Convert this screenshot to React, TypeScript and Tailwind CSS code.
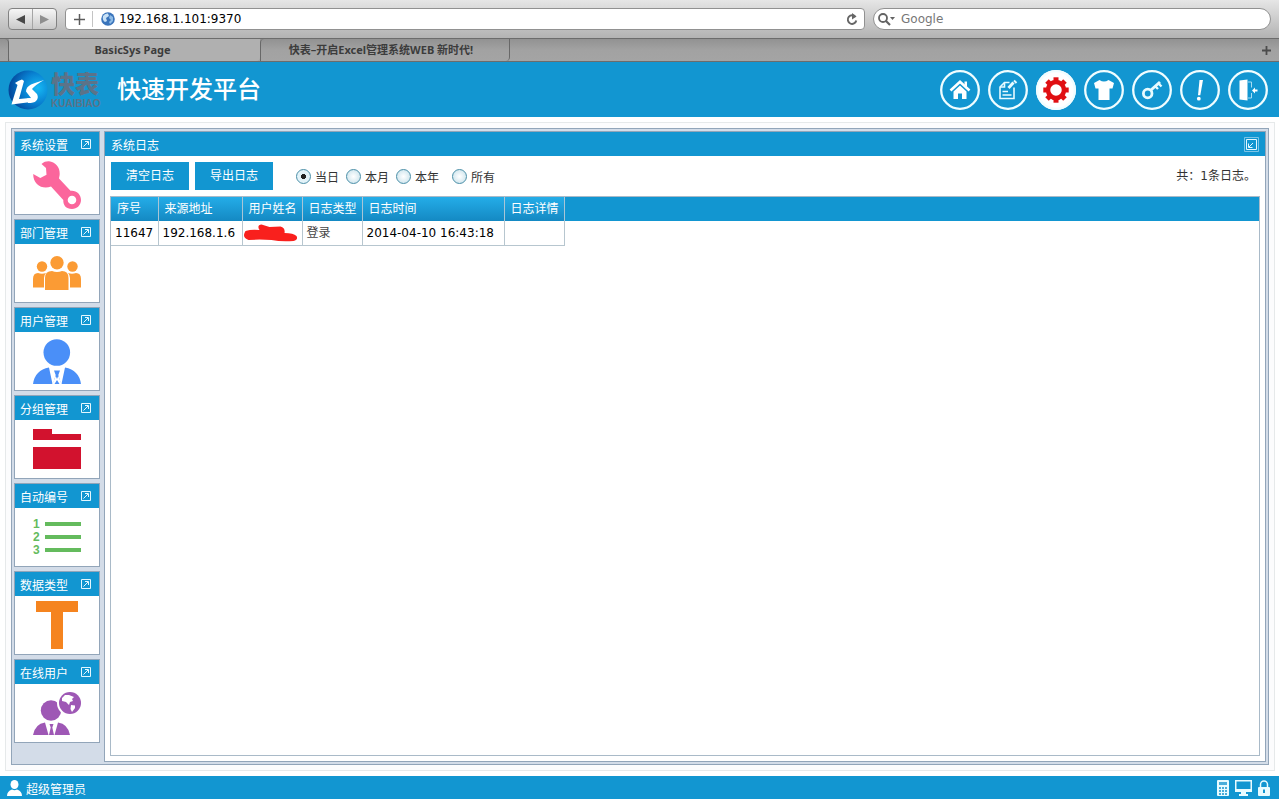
import type { ReactNode } from "react";

type Shortcut = { label: string; icon: ReactNode };
type Tool = { label: string; icon: ReactNode; active?: boolean };

const shortcuts: Shortcut[] = [
  {
    label: "系统设置",
    icon: (
      <svg width="48" height="48" viewBox="0 0 48 48" aria-hidden>
        <path
          fill="#fb669c"
          fillRule="evenodd"
          d="M8.500 3C11 .8 13 .2 16 .3C22 1 27 6 26.700 13C26.600 15 26 16.500 26 17.500L37.500 29.800C43 29 48 33 48 39C48 44 44 48 39 48C33 48 30 44 30.300 39L18 25.500C10 29 0 24 .2 13L7.300 17L13.500 13.700L13 7ZM39 34.700A4.300 4.300 0 1 0 39 43.300A4.300 4.300 0 1 0 39 34.700Z"
        />
      </svg>
    ),
  },
  {
    label: "部门管理",
    icon: (
      <svg width="48" height="34" viewBox="0 0 48 34" fill="#fb9b34" aria-hidden>
        <circle cx="24" cy="6.700" r="6.700" />
        <circle cx="9" cy="10.500" r="5.200" />
        <circle cx="39.500" cy="10.500" r="5.200" />
        <path d="M12 34V22Q12 15 19 15Q24 17 29 15Q35.500 15 35.500 22V34Z" />
        <path d="M0 31.500V23Q0 17 5 17Q9 18.500 13 17Q11 19 11 22V31.500Z" />
        <path d="M48 31.500V23Q48 17 43 17Q39 18.500 35 17Q37 19 37 22V31.500Z" />
      </svg>
    ),
  },
  {
    label: "用户管理",
    icon: (
      <svg width="48" height="45" viewBox="0 0 48 45" fill="#4a8ff8" aria-hidden>
        <circle cx="23.800" cy="13.500" r="13.300" />
        <path d="M0 45Q2 31 16 28.500L19.500 45ZM48 45Q46 31 32 28.500L28.500 45Z" />
        <path d="M21 31.500H27L25.300 36L28 45H20L22.700 36Z" />
        <path fill="#fff" d="M19.500 45L22.700 37L24 40L25.300 37L28.500 45H26.500L24 41L21.500 45Z" />
      </svg>
    ),
  },
  {
    label: "分组管理",
    icon: (
      <svg width="48" height="40" viewBox="0 0 48 40" fill="#d2122e" aria-hidden>
        <path d="M0 0H19V5H48V11H0ZM0 18H48V40H0Z" />
      </svg>
    ),
  },
  {
    label: "自动编号",
    icon: (
      <svg width="48" height="38" viewBox="0 0 48 38" fill="#64bb5d" aria-hidden>
        <path d="M12 4H48V8H12ZM12 17H48V21H12ZM12 30H48V34H12Z" />
        <g className="font-['Liberation_Sans',sans-serif] text-[12px] font-bold">
          <text x="0" y="10">1</text>
          <text x="0" y="23">2</text>
          <text x="0" y="36">3</text>
        </g>
      </svg>
    ),
  },
  {
    label: "数据类型",
    icon: (
      <svg width="42" height="48" viewBox="0 0 42 48" fill="#f5841f" aria-hidden>
        <path d="M0 0H42V11H27V48H15V11H0Z" />
      </svg>
    ),
  },
  {
    label: "在线用户",
    icon: (
      <svg width="48" height="43" viewBox="0 0 48 43" fill="#9e58b5" aria-hidden>
        <circle cx="18" cy="18.500" r="10.200" />
        <path d="M0 43Q2 32 12 30.500L15.500 43ZM37 43Q35 32 25 30.500L21.500 43Z" />
        <path d="M16.500 32H20.500L19.300 35.500L21 43H16L17.700 35.500Z" />
        <circle cx="37" cy="11" r="13" fill="#fff" />
        <circle cx="37" cy="11" r="11" />
        <path
          fill="#fff"
          d="M29 6L32 3L36 3L41 5L39 7L40 9L37 10L36 13L33 10L29 9ZM38 13L42 13.500L42 16L39 20L37.500 17Z"
        />
      </svg>
    ),
  },
];

const tools: Tool[] = [
  {
    label: "首页",
    icon: (
      <>
        <path d="M10.500 20.500L20 11.800L29.500 20.500" fill="none" stroke="#fff" strokeWidth="2.600" />
        <path d="M24.500 11.500H27V17L24.500 15Z" />
        <path d="M13.500 21.500L20 15.500L26.500 21.500V29H22V23.500H18V29H13.500Z" />
      </>
    ),
  },
  {
    label: "日志",
    icon: (
      <g fill="none" stroke="#e8fbff" strokeWidth="1.600">
        <path d="M21.500 12.500H16.500L12 17V28.500H26V17.500" />
        <path d="M16.500 12.500V17H12M14.500 21.500H20M14.500 25H23.500" />
        <path d="M20.500 18L25.500 12.500" strokeWidth="3" />
        <path d="M26 10.500L28.500 13" strokeWidth="2" />
      </g>
    ),
  },
  {
    label: "设置",
    active: true,
    icon: (
      <g stroke="#e00f12" fill="none">
        <circle cx="20" cy="20" r="8" strokeWidth="4.500" />
        {[0, 45, 90, 135, 180, 225, 270, 315].map((a) => (
          <path key={a} d="M20 11.500V7.300" strokeWidth="5" transform={`rotate(${a} 20 20)`} />
        ))}
      </g>
    ),
  },
  {
    label: "皮肤",
    icon: <path d="M15.500 10Q20 13 24.500 10L30 13L28.500 18.500H25.500V30H14.500V18.500H11.500L10 13Z" />,
  },
  {
    label: "密码",
    icon: (
      <g fill="none" stroke="#e8fbff">
        <circle cx="15.700" cy="23.500" r="4.300" strokeWidth="2.800" />
        <path d="M19 20L28 12" strokeWidth="3" />
        <path d="M23.500 16.500L26 19M26.500 13.500L29.500 16.500" strokeWidth="2.400" />
      </g>
    ),
  },
  {
    label: "提示",
    icon: (
      <>
        <path d="M19.500 10H23L20.300 25.300H18Z" />
        <circle cx="18.800" cy="28.700" r="1.900" />
      </>
    ),
  },
  {
    label: "退出",
    icon: (
      <>
        <path d="M11.500 10.500L19.500 9.500V30.500L11.500 29.500Z" />
        <path d="M20 12H23.500V17.500M23.500 23V28H20" fill="none" stroke="#a6dcf2" />
        <path d="M24 20.500L27 17.500V19.500H29.500V21.500H27V23.500Z" />
      </>
    ),
  },
];

const ranges = ["当日", "本月", "本年", "所有"];

const columns = [
  { name: "序号", width: "w-[47px]" },
  { name: "来源地址", width: "w-[84px]" },
  { name: "用户姓名", width: "w-[60px]" },
  { name: "日志类型", width: "w-[60px]" },
  { name: "日志时间", width: "w-[142px]" },
  { name: "日志详情", width: "w-[60px]" },
];

function BrowserBar() {
  return (
    <div>
      <div className="flex h-[39px] items-start gap-2 border-b border-[#6c6c6c] bg-linear-to-b from-[#e6e6e6] to-[#b3b3b3] px-2 pt-2">
        <div className="flex h-[22px] w-[49px] shrink-0 divide-x divide-[#a5a5a5] rounded border border-[#828282] bg-linear-to-b from-[#f6f6f6] to-[#c9c9c9]">
          <button aria-label="Back" className="flex flex-1 items-center justify-center">
            <svg width="9" height="9" viewBox="0 0 9 9" aria-hidden>
              <path d="M9 0V9L0 4.500Z" fill="#484848" />
            </svg>
          </button>
          <button aria-label="Forward" className="flex flex-1 items-center justify-center">
            <svg width="9" height="9" viewBox="0 0 9 9" aria-hidden>
              <path d="M0 0V9L9 4.500Z" fill="#8e8e8e" />
            </svg>
          </button>
        </div>
        <div className="flex h-[22px] flex-1 items-center rounded border border-[#919191] bg-white pr-1.5">
          <button aria-label="Add bookmark" className="flex h-4 w-[27px] items-center justify-center border-r border-[#c4c4c4]">
            <svg width="11" height="11" viewBox="0 0 11 11" aria-hidden>
              <path d="M5.500 0V11M0 5.500H11" stroke="#5c5c5c" strokeWidth="1.500" />
            </svg>
          </button>
          <svg className="mr-1 ml-2 shrink-0" width="14" height="14" viewBox="0 0 14 14" aria-hidden>
            <circle cx="7" cy="7" r="6.800" fill="#3a74bb" />
            <path d="M2 4Q4 1 7 1.500L8 4L5 6L6 9L4 10Q1 8 2 4Z" fill="#c9e2f6" />
            <path d="M9 3L12 5L12 9L9 12L8 10L10 8L8 6Z" fill="#8dbbe6" />
          </svg>
          <input
            aria-label="Address"
            defaultValue="192.168.1.101:9370"
            className="min-w-0 flex-1 bg-transparent text-black outline-none"
          />
          <button aria-label="Reload">
            <svg width="12" height="13" viewBox="0 0 12 13" fill="none" stroke="#666" aria-hidden>
              <path d="M9.500 4A4.300 4.300 0 1 0 10.300 7.500" strokeWidth="1.900" />
              <path d="M6 0L10.500 3.500L6 6.500Z" fill="#666" stroke="none" />
            </svg>
          </button>
        </div>
        <div className="flex h-[22px] basis-[398px] items-center rounded-full border border-[#919191] bg-white pl-1">
          <svg className="mr-1.5 shrink-0" width="17" height="13" viewBox="0 0 17 13" aria-hidden>
            <circle cx="5" cy="5" r="4" fill="none" stroke="#636363" strokeWidth="1.800" />
            <path d="M8 8L12 12" stroke="#636363" strokeWidth="2.200" />
            <path d="M12 4H17L14.500 7Z" fill="#636363" />
          </svg>
          <input
            aria-label="Search"
            placeholder="Google"
            className="min-w-0 flex-1 bg-transparent outline-none placeholder:text-[#777]"
          />
        </div>
      </div>
      <div className="flex h-[23px] items-stretch border-b border-[#6c6c6c] bg-linear-to-b from-[#929292] via-[#a2a2a2] to-[#a4a4a4] font-['Noto_Sans','Noto_Sans_CJK_SC',sans-serif] text-[11px] font-bold text-[#3c3c3c]">
        <div className="w-[9px] rounded-tr border-r border-[#686868]" />
        <button className="w-[251px] rounded-b bg-[#b0b0b0] pr-1">BasicSys Page</button>
        <button className="w-[250px] rounded-tl rounded-br border-r border-l border-[#686868] pr-2">
          快表–开启Excel管理系统WEB 新时代!
        </button>
        <button aria-label="New tab" className="mr-2 ml-auto">
          <svg width="9" height="9" viewBox="0 0 9 9" aria-hidden>
            <path d="M4.500 0V9M0 4.500H9" stroke="#4c4c4c" strokeWidth="1.800" />
          </svg>
        </button>
      </div>
    </div>
  );
}

function Header() {
  return (
    <header className="flex h-[55px] items-center bg-[#1296d1] pr-[11px] pl-2">
      <svg className="shrink-0" width="40" height="40" viewBox="0 0 40 40" aria-hidden>
        <defs>
          <radialGradient id="ball" cx="0.750" cy="0.450" r="0.800">
            <stop offset="0" stopColor="#16b9f4" />
            <stop offset="0.500" stopColor="#087fd0" />
            <stop offset="1" stopColor="#033c91" />
          </radialGradient>
        </defs>
        <circle cx="20" cy="20" r="19.500" fill="url(#ball)" />
        <path fill="#fff" d="M7 13Q11 10 14 9.500L16 11L11 29L22 28L23 32L3.500 34.500L4.500 31L9.500 15Z" />
        <path
          fill="#fff"
          d="M27 13L36 10Q28 14.500 24 19L29 24Q31 28 28 31Q26 33 20 33L19 28.500L23 28L18 21.500Q18 17 23 14.500Z"
        />
      </svg>
      <div className="ml-[3px] w-[52px] text-[#5b7389]">
        <div className="text-2xl leading-[26px] font-black">快表</div>
        <div className="mt-0.5 font-['Liberation_Sans',sans-serif] text-[10px] leading-2 font-bold">KUAIBIAO</div>
      </div>
      <h1 className="ml-3.5 text-2xl font-medium text-white">快速开发平台</h1>
      <nav className="ml-auto flex gap-2">
        {tools.map((t) => (
          <button
            key={t.label}
            aria-label={t.label}
            className={`size-10 rounded-full ${t.active ? "bg-white" : ""}`}
          >
            <svg width="40" height="40" viewBox="0 0 40 40" fill="#fff" aria-hidden>
              <circle cx="20" cy="20" r="18.800" fill="none" stroke="#f0fdff" strokeWidth="2.300" />
              {t.icon}
            </svg>
          </button>
        ))}
      </nav>
    </header>
  );
}

function ShortcutCard({ label, icon }: Shortcut) {
  return (
    <section className="border border-[#92a5b9] bg-white">
      <div className="flex h-6 items-center justify-between bg-[#1296d1] pr-2 pl-[5px] text-white">
        <h2 className="pt-1">{label}</h2>
        <button aria-label={`打开${label}`}>
          <svg width="10" height="10" viewBox="0 0 10 10" fill="none" stroke="#e2f7ff" aria-hidden>
            <path d="M.5 .5H9.500V9.500H.5ZM2.500 7.500L7 3M4 2.500H7.500V6" />
          </svg>
        </button>
      </div>
      <div className="flex h-[58px] items-center justify-center">{icon}</div>
    </section>
  );
}

function LogTable() {
  return (
    <div className="flex-1 border border-[#a9bac8]">
      <div className="bg-[#1296d1]">
        <table className="w-[453px] table-fixed border-collapse bg-white text-left">
          <thead>
            <tr className="h-6 bg-linear-to-b from-[#24ade8] to-[#1489c3] text-white">
              {columns.map((c) => (
                <th key={c.name} className={`${c.width} border-r border-[#a9c5d6] p-0 pl-1.5 font-normal whitespace-nowrap`}>
                  {c.name}
                </th>
              ))}
            </tr>
          </thead>
        </table>
      </div>
      <table className="w-[453px] table-fixed border-collapse whitespace-nowrap text-black">
        <colgroup>
          {columns.map((c) => (
            <col key={c.name} className={c.width} />
          ))}
        </colgroup>
        <tbody>
          <tr className="h-6 *:border-r *:border-b *:border-[#b7c6cf] *:p-0 *:pl-1">
            <td>11647</td>
            <td>192.168.1.6</td>
            <td>
              <svg className="-ml-1" width="55" height="18" viewBox="0 0 54 18" aria-hidden>
                <path
                  fill="#f9201d"
                  d="M2 7Q8 5 16 6Q13 1 18 .5L26 3L37 2.500Q42 4 41 9Q50 9 53 12Q55 16 50 17Q38 18 28 16L16 15.500L5 16Q-1 14 1 9Z"
                />
              </svg>
            </td>
            <td className="text-[#444]">登录</td>
            <td>2014-04-10 16:43:18</td>
            <td />
          </tr>
        </tbody>
      </table>
    </div>
  );
}

function LogPanel() {
  return (
    <main className="flex min-w-0 flex-1 flex-col border border-[#92a5b9] bg-white">
      <div className="flex h-6 items-center justify-between bg-[#1296d1] px-1.5 text-white">
        <h2 className="pt-1">系统日志</h2>
        <button aria-label="还原">
          <svg width="15" height="15" viewBox="0 0 15 15" fill="none" stroke="#e2f7ff" aria-hidden>
            <path d="M.5 .5H14.500V14.500H.5Z" stroke="#7cc4e6" />
            <path d="M2.500 2.500H12.500V12.500H2.500ZM9 6L5 10M4.500 6.500V10.500H8.500" />
          </svg>
        </button>
      </div>
      <div className="flex flex-1 flex-col px-[5px] pt-1.5 pb-[5px]">
        <div className="mb-1.5 flex h-7 items-center text-[#333]">
          <div className="flex gap-1.5 pl-px">
            <button className="h-7 w-[78px] bg-[#1296d1] text-white">清空日志</button>
            <button className="h-7 w-[78px] bg-[#1296d1] text-white">导出日志</button>
          </div>
          <div className="ml-[23px] flex gap-[7px] *:last:ml-1.5">
            {ranges.map((r, i) => (
              <label key={r} className="flex items-center gap-1">
                <input
                  type="radio"
                  name="range"
                  defaultChecked={i === 0}
                  className="size-[15px] appearance-none rounded-full border border-[#4a8fa8] bg-radial from-white to-[#c3dfe9] checked:from-[#222] checked:from-25% checked:to-[#e3f3f9] checked:to-30%"
                />
                <span className="pt-1">{r}</span>
              </label>
            ))}
          </div>
          <p className="ml-auto pr-1">共：1条日志。</p>
        </div>
        <LogTable />
      </div>
    </main>
  );
}

function StatusBar() {
  return (
    <footer className="flex h-[23px] items-center bg-[#1296d1] pr-[9px] pl-[7px] text-white">
      <svg width="15" height="16" viewBox="0 0 15 16" fill="#fff" aria-hidden>
        <ellipse cx="7.500" cy="4.500" rx="4" ry="4.500" />
        <path d="M0 16Q0 11 5 9.500Q7.500 11 10 9.500Q15 11 15 16Z" />
      </svg>
      <span className="ml-1 pt-1">超级管理员</span>
      <div className="ml-auto flex items-center gap-1.5">
        <button aria-label="计算器">
          <svg width="12" height="16" viewBox="0 0 12 16" aria-hidden>
            <rect width="12" height="16" rx="1" fill="#e8fbff" />
            <path d="M2 2H10V5H2ZM2 7H4V9H2ZM5 7H7V9H5ZM8 7H10V9H8ZM2 10H4V12H2ZM5 10H7V12H5ZM8 10H10V12H8ZM2 13H4V15H2ZM5 13H7V15H5ZM8 13H10V15H8Z" fill="#4aaeda" />
          </svg>
        </button>
        <button aria-label="桌面">
          <svg width="17" height="16" viewBox="0 0 17 16" aria-hidden>
            <path d="M0 0H17V12H0ZM6 12H11V14H13V16H4V14H6Z" fill="#e8fbff" />
            <path d="M1.500 1.500H15.500V9H1.500Z" fill="#1296d1" />
          </svg>
        </button>
        <button aria-label="锁定">
          <svg width="12" height="16" viewBox="0 0 12 16" aria-hidden>
            <path d="M2.500 8V4.500A3.500 3.500 0 0 1 9.500 4.500V8" fill="none" stroke="#e8fbff" strokeWidth="1.500" />
            <rect y="7" width="12" height="9" rx="1" fill="#e8fbff" />
            <path d="M5 9.500H7V13H5Z" fill="#1296d1" />
          </svg>
        </button>
      </div>
    </footer>
  );
}

export default function App() {
  return (
    <div className="flex min-h-screen flex-col bg-white font-['DejaVu_Sans','Noto_Sans_CJK_SC',sans-serif] text-xs">
      <BrowserBar />
      <Header />
      <div className="mt-[5px] mr-1 mb-[5px] ml-[5px] flex flex-1 flex-col border border-[#e6e9ea] bg-[#fcfcfd] p-[5px]">
        <div className="flex flex-1 gap-1 border border-[#92a5b9] bg-[#d3dce8] p-0.5">
          <aside className="flex w-[86px] shrink-0 flex-col gap-1">
            {shortcuts.map((s) => (
              <ShortcutCard key={s.label} {...s} />
            ))}
          </aside>
          <LogPanel />
        </div>
      </div>
      <StatusBar />
    </div>
  );
}
